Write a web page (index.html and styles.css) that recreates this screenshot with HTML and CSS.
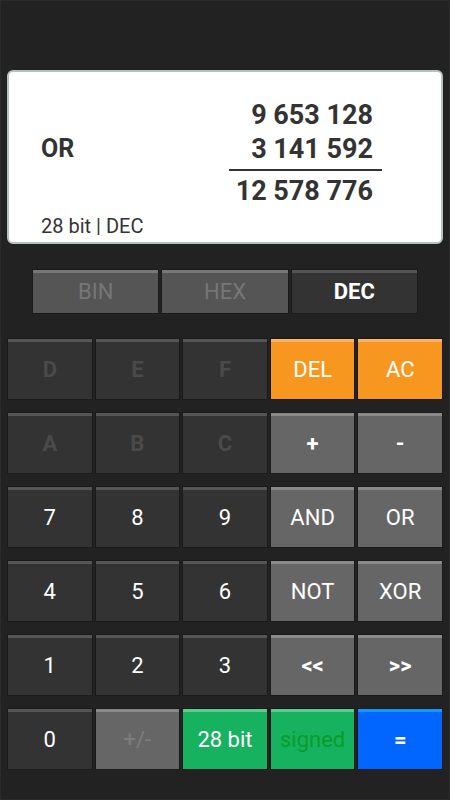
FILE: index.html
```html
<!DOCTYPE html>
<html lang="en">
<head>
    <meta charset="UTF-8" />
    <title>Programmer Calculator</title>
    <link rel="stylesheet" href="styles.css">
</head>
<body>

<div class="screen">

    <div class="display">
        <div class="calc">
            <div class="num">9 653 128</div>
            <div class="op">OR</div>
            <div class="num">3 141 592</div>
            <div class="rule"></div>
            <div class="num">12 578 776</div>
        </div>
        <div class="status">28 bit | DEC</div>
    </div>

    <div class="modes">
        <button class="mode">BIN</button>
        <button class="mode">HEX</button>
        <button class="mode active">DEC</button>
    </div>

    <div class="keys">
        <button class="key off">D</button>
        <button class="key off">E</button>
        <button class="key off">F</button>
        <button class="key orange">DEL</button>
        <button class="key orange">AC</button>

        <button class="key off">A</button>
        <button class="key off">B</button>
        <button class="key off">C</button>
        <button class="key grey bold">+</button>
        <button class="key grey bold">-</button>

        <button class="key">7</button>
        <button class="key">8</button>
        <button class="key">9</button>
        <button class="key grey">AND</button>
        <button class="key grey">OR</button>

        <button class="key">4</button>
        <button class="key">5</button>
        <button class="key">6</button>
        <button class="key grey">NOT</button>
        <button class="key grey">XOR</button>

        <button class="key">1</button>
        <button class="key">2</button>
        <button class="key">3</button>
        <button class="key grey bold">&lt;&lt;</button>
        <button class="key grey bold">&gt;&gt;</button>

        <button class="key">0</button>
        <button class="key grey dim">+/-</button>
        <button class="key green">28 bit</button>
        <button class="key green signed">signed</button>
        <button class="key blue bold">=</button>
    </div>

</div>

</body>
</html>
```

FILE: styles.css
```css
body {
    margin: 0;
    background-color: #222;
    font-family: Roboto, "Liberation Sans", sans-serif;
}
.screen {
    box-sizing: border-box;
    height: 800px;
    padding: 69px 6px 0;
    border: 1px solid #2c2c2c;
}

/* display card */
.display {
    box-sizing: border-box;
    height: 174px;
    padding: 26px 0 0 32px;
    background-color: #fff;
    border: 2px solid #b6c0c0;
    border-radius: 6px;
    color: #333;
}
.calc {
    display: grid;
    grid-template-columns: 1fr 153px;
    margin-right: 59px;
}
.num {
    grid-column: 2;
    text-align: right;
    padding-right: 9px;
    font-size: 27px;
    font-weight: 700;
    line-height: 34px;
}
.op {
    grid-column: 1;
    grid-row: 2;
    font-size: 25px;
    font-weight: 700;
    line-height: 34px;
}
.rule {
    grid-column: 2;
    height: 2px;
    margin: 3px 0;
    background-color: #333;
}
.status {
    margin-top: 6px;
    font-size: 20px;
    line-height: 24px;
}

/* base buttons */
.mode, .key {
    border: 0;
    padding: 0;
    font-family: inherit;
    font-size: 22px;
    color: #fff;
    background-color: #333;
    box-shadow: inset 0 3px 0 #555, 0 0 0 1px #1a1a1a;
}

.modes {
    display: grid;
    grid-template-columns: repeat(3, 1fr);
    gap: 4px;
    width: 384px;
    margin: 26px auto 0;
}
.mode {
    height: 43px;
    color: #777;
    background-color: #555;
    box-shadow: inset 0 3px 0 #777, 0 0 0 1px #1a1a1a;
}
.mode.active {
    color: #fff;
    font-weight: 700;
    background-color: #333;
    box-shadow: inset 0 3px 0 #555, 0 0 0 1px #1a1a1a;
}

.keys {
    display: grid;
    grid-template-columns: repeat(5, 1fr);
    grid-auto-rows: 60px;
    gap: 14px 4px;
    margin: 26px 1px 0;
}
.key.off {
    color: #4a4a4a;
    font-weight: 700;
}
.key.bold {
    font-weight: 700;
}
.key.grey {
    background-color: #666;
    box-shadow: inset 0 3px 0 #8a8a8a, 0 0 0 1px #1a1a1a;
}
.key.dim {
    color: #7d7d7d;
}
.key.orange {
    background-color: #f8971f;
    box-shadow: inset 0 3px 0 #fbb466, 0 0 0 1px #1a1a1a;
}
.key.green {
    background-color: #17b25f;
    box-shadow: inset 0 3px 0 #5ccc8c, 0 0 0 1px #1a1a1a;
}
.key.signed {
    color: #0a9c28;
}
.key.blue {
    background-color: #0066ff;
    box-shadow: inset 0 3px 0 #0a9cff, 0 0 0 1px #1a1a1a;
}
```
